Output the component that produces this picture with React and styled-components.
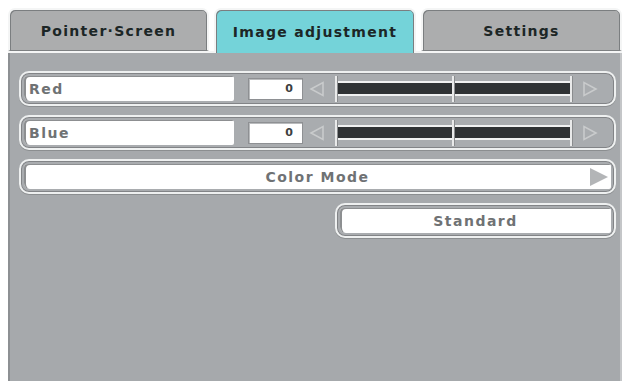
import React from "react";
import styled, { createGlobalStyle } from "styled-components";

const Global = createGlobalStyle`
  html, body { margin: 0; padding: 0; background: #ffffff; }
  body { font-family: "DejaVu Sans", "Liberation Sans", sans-serif; }
  * { box-sizing: border-box; }
`;

const Frame = styled.div`
  width: 614px;
  height: 381px;
  margin-left: 8px;
  padding-top: 6px;
  display: flex;
  flex-direction: column;
`;

const TabBar = styled.div`
  display: grid;
  grid-template-columns: 201px 202px 201px;
  column-gap: 5px;
  height: 47px;
  align-items: end;
  border-bottom: 2px solid #f4f5f5;
`;

const Tab = styled.div`
  height: ${(p) => (p.$active ? "45px" : "43px")};
  margin-bottom: ${(p) => (p.$active ? "-2px" : "0")};
  display: flex;
  align-items: center;
  justify-content: center;
  background: ${(p) => (p.$active ? "#74d3d9" : "#acadae")};
  border: 2px solid #f4f5f5;
  border-bottom: ${(p) => (p.$active ? "none" : "1px solid #7d8082")};
  border-radius: 7px 7px 0 0;
  box-shadow: inset 1px 1px 0 #7b7e80, inset -1px 0 0 #7b7e80;
  font-weight: bold;
  font-size: 14px;
  letter-spacing: 1.3px;
  color: #1c2626;
  padding-top: ${(p) => (p.$active ? "0" : "2px")};
`;

const Panel = styled.div`
  flex: 1;
  background: #a6a9ac;
  border-left: 2px solid #8d9093;
  border-right: 2px solid #c4c6c8;
  padding: 18px 4px 0 9px;
  display: flex;
  flex-direction: column;
  gap: 9px;
`;

const Shell = styled.div`
  height: 35px;
  border: 2px solid #eef0f0;
  border-radius: 10px;
  box-shadow: inset 0 0 0 1px #828487, 0 1px 0 #8b8e90;
  background: #a9acaf;
  padding: 3px;
  display: flex;
  align-items: center;
  align-self: ${(p) => (p.$right ? "flex-end" : "stretch")};
  width: ${(p) => (p.$width ? p.$width : "auto")};
`;

const Field = styled.div`
  height: 100%;
  width: ${(p) => p.$width || "auto"};
  flex: ${(p) => (p.$grow ? "1" : "none")};
  background: #ffffff;
  border-radius: 4px 2px 2px 6px;
  box-shadow: inset 2px 1px 0 #8d8f91;
  display: flex;
  align-items: center;
  justify-content: ${(p) => (p.$center ? "center" : "flex-start")};
  padding-left: ${(p) => (p.$center ? "0" : "5px")};
  position: relative;
  font-weight: bold;
  font-size: 14px;
  letter-spacing: 1.5px;
  color: #6f7274;
`;

const ValueBox = styled.div`
  width: 55px;
  height: 22px;
  margin-left: 14px;
  background: #ffffff;
  border: 1px solid #8e9093;
  box-shadow: inset 1px 1px 0 #b9bbbd;
  display: flex;
  align-items: center;
  justify-content: flex-end;
  padding-right: 9px;
  font-weight: bold;
  font-size: 11px;
  color: #3d3f41;
`;

const ArrowWrap = styled.div`
  width: 20px;
  height: 18px;
  margin: 0 ${(p) => p.$mr || "0"} 0 ${(p) => p.$ml || "0"};
  display: flex;
  align-items: center;
  justify-content: center;
`;

const Track = styled.div`
  width: 237px;
  height: 28px;
  position: relative;
  display: flex;
  align-items: center;
`;

const Bar = styled.div`
  width: 100%;
  height: 15px;
  background: #2f3234;
  border: 2px solid #f0f1f1;
  border-radius: 1px;
`;

const Tick = styled.div`
  position: absolute;
  top: 1px;
  bottom: 1px;
  width: 2px;
  background: #e9eaea;
  box-shadow: 1px 0 0 #8a8c8e;
`;

const RightTri = styled.div`
  position: absolute;
  right: 3px;
  top: 50%;
  transform: translateY(-50%);
  width: 0;
  height: 0;
  border-top: 9px solid transparent;
  border-bottom: 9px solid transparent;
  border-left: 18px solid #b3b5b7;
`;

const Arrow = ({ dir }) => (
  <svg width="16" height="16" viewBox="0 0 16 16">
    {dir === "left" ? (
      <polygon points="14,1.5 14,14.5 2,8" fill="none" stroke="#c9cbcc" strokeWidth="1.6" />
    ) : (
      <polygon points="2,1.5 2,14.5 14,8" fill="none" stroke="#c9cbcc" strokeWidth="1.6" />
    )}
  </svg>
);

const SliderRow = ({ label, value }) => (
  <Shell>
    <Field $width="210px">{label}</Field>
    <ValueBox>{value}</ValueBox>
    <ArrowWrap $ml="4px" $mr="8px">
      <Arrow dir="left" />
    </ArrowWrap>
    <Track>
      <Bar />
      <Tick style={{ left: "0px" }} />
      <Tick style={{ left: "117px" }} />
      <Tick style={{ right: "0px" }} />
    </Track>
    <ArrowWrap $ml="8px">
      <Arrow dir="right" />
    </ArrowWrap>
  </Shell>
);

export default function App() {
  return (
    <>
      <Global />
      <Frame>
        <TabBar>
          <Tab>Pointer·Screen</Tab>
          <Tab $active>Image adjustment</Tab>
          <Tab>Settings</Tab>
        </TabBar>
        <Panel>
          <SliderRow label="Red" value="0" />
          <SliderRow label="Blue" value="0" />
          <Shell>
            <Field $grow $center>
              Color Mode
              <RightTri />
            </Field>
          </Shell>
          <Shell $right $width="281px">
            <Field $grow $center>Standard</Field>
          </Shell>
        </Panel>
      </Frame>
    </>
  );
}
